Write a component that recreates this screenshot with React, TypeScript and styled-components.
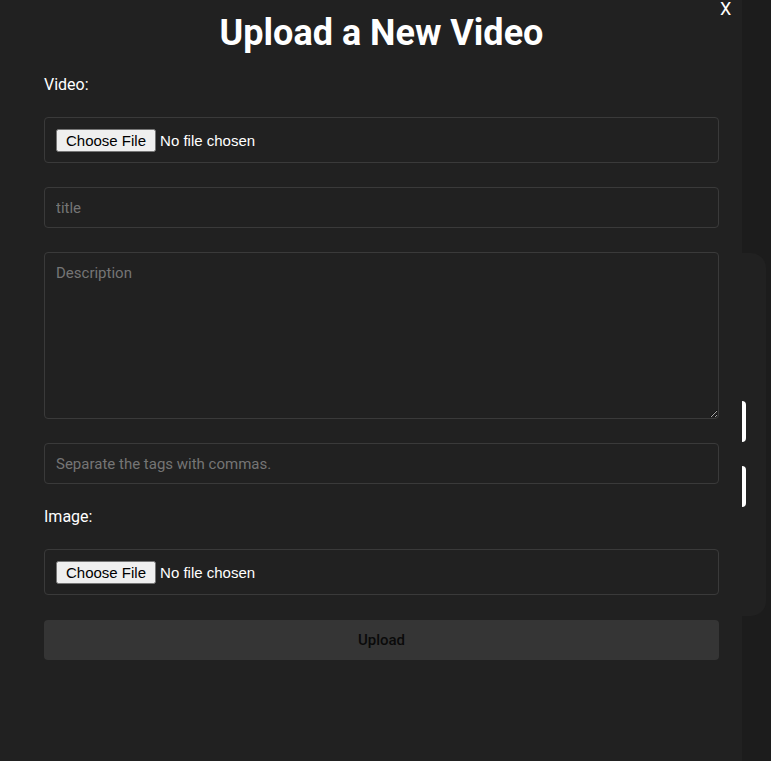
import { styled, createGlobalStyle } from "styled-components";

const GlobalStyle = createGlobalStyle`
  body {
    margin: 0;
    background-color: #1c1c1c;
    font-family: Roboto, "Liberation Sans", sans-serif;
  }
`;

const Page = styled.div`
  display: flex;
  min-height: 100vh;
  overflow: hidden;
`;

const Modal = styled.div`
  display: grid;
  grid-template-columns: 44px 675px 23px;
  grid-template-rows: auto 1fr;
  width: 742px;
  min-height: 761px;
  background-color: #212121;
  align-content: start;
`;

const Title = styled.h1`
  grid-column: 2;
  grid-row: 1;
  margin: 12px 0 0;
  color: #ffffff;
  font-size: 36px;
  font-weight: 700;
  line-height: normal;
  text-align: center;
`;

const CloseButton = styled.button`
  grid-column: 3;
  grid-row: 1;
  align-self: start;
  justify-self: start;
  margin-top: 2px;
  padding: 0 0 0 1px;
  border: none;
  background: transparent;
  color: #ffffff;
  font-family: Roboto, sans-serif;
  font-size: 18px;
  line-height: 14px;
  cursor: pointer;
`;

const Form = styled.form`
  grid-column: 2;
  grid-row: 2;
  display: flex;
  flex-direction: column;
  gap: 24px;
  margin-top: 22px;
`;

const Label = styled.label`
  color: #ffffff;
  font-size: 16px;
  line-height: 17px;
`;

const FileBox = styled.div`
  box-sizing: border-box;
  height: 46px;
  padding: 11px;
  border: 1px solid #3a3a3a;
  border-radius: 4px;
`;

const FileInput = styled.input`
  color: #ffffff;
  font-family: "Liberation Sans", Arial, sans-serif;
  font-size: 15px;

  &::file-selector-button {
    height: 23px;
    padding: 0 8px;
    font-family: "Liberation Sans", Arial, sans-serif;
    font-size: 15px;
  }
`;

const TextInput = styled.input`
  box-sizing: border-box;
  height: 41px;
  padding: 0 11px;
  border: 1px solid #3a3a3a;
  border-radius: 4px;
  background-color: transparent;
  color: #ffffff;
  font-family: Roboto, sans-serif;
  font-size: 15px;
  outline: none;

  &::placeholder {
    color: #757575;
  }
`;

const TextArea = styled.textarea`
  box-sizing: border-box;
  height: 167px;
  padding: 11px;
  border: 1px solid #3a3a3a;
  border-radius: 4px;
  background-color: transparent;
  color: #ffffff;
  font-family: Roboto, sans-serif;
  font-size: 15px;
  outline: none;
  resize: vertical;

  &::placeholder {
    color: #757575;
  }
`;

const UploadButton = styled.button`
  height: 40px;
  margin-top: 1px;
  border: none;
  border-radius: 4px;
  background-color: #353535;
  color: #0a0a0a;
  font-family: Roboto, sans-serif;
  font-size: 15px;
  font-weight: 500;
  cursor: pointer;
`;

const Aside = styled.div`
  flex: 1;
`;

const BehindCard = styled.div`
  display: flex;
  flex-direction: column;
  gap: 24px;
  width: 24px;
  height: 363px;
  margin-top: 253px;
  padding-top: 148px;
  box-sizing: border-box;
  background-color: #212121;
  border-radius: 0 15px 15px 0;
`;

const PeekBar = styled.div`
  width: 4px;
  height: 41px;
  background-color: #ffffff;
  border-radius: 0 4px 4px 0;
`;

export default function App() {
  return (
    <>
      <GlobalStyle />
      <Page>
        <Modal>
          <Title>Upload a New Video</Title>
          <CloseButton type="button">X</CloseButton>
          <Form onSubmit={(e) => e.preventDefault()}>
            <Label htmlFor="video">Video:</Label>
            <FileBox>
              <FileInput id="video" type="file" accept="video/*" />
            </FileBox>
            <TextInput type="text" placeholder="title" />
            <TextArea placeholder="Description" />
            <TextInput type="text" placeholder="Separate the tags with commas." />
            <Label htmlFor="image">Image:</Label>
            <FileBox>
              <FileInput id="image" type="file" accept="image/*" />
            </FileBox>
            <UploadButton type="submit">Upload</UploadButton>
          </Form>
        </Modal>
        <Aside>
          <BehindCard>
            <PeekBar />
            <PeekBar />
          </BehindCard>
        </Aside>
      </Page>
    </>
  );
}
